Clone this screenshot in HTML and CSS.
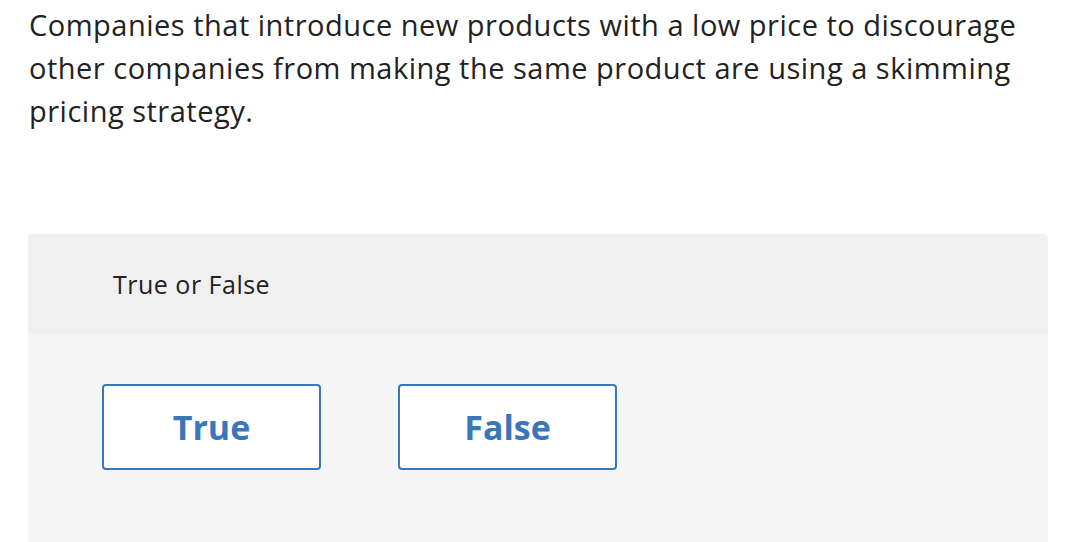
FILE: index.html
```html
<!DOCTYPE html>
<html lang="en">
<head>
<meta charset="utf-8">
<title>True or False</title>
<link rel="stylesheet" href="styles.css">
</head>
<body>
<main class="page">
  <p class="question">Companies that introduce new products with a low price to discourage other companies from making the same product are using a skimming pricing strategy.</p>
  <section class="panel">
    <header class="panel-head">True or False</header>
    <div class="panel-body">
      <button class="choice" type="button">True</button>
      <button class="choice" type="button">False</button>
    </div>
  </section>
</main>
</body>
</html>
```
FILE: styles.css
```css
html, body {
  margin: 0;
  padding: 0;
  background: #ffffff;
}
body {
  font-family: "Open Sans", "Liberation Sans", sans-serif;
  color: #222222;
}
.page {
  padding: 3px 34px 0 28px;
}
.question {
  margin: 0 0 0 1px;
  max-width: 1020px;
  font-size: 29px;
  line-height: 43px;
  letter-spacing: 0.5px;
  color: #222222;
}
.panel {
  margin-top: 102px;
  border-radius: 4px 4px 0 0;
  overflow: hidden;
}
.panel-head {
  background: #f0f0f0;
  height: 100px;
  display: flex;
  align-items: center;
  padding-left: 85px;
  font-size: 25px;
  letter-spacing: 0.5px;
  color: #222222;
}
.panel-body {
  background: #f5f5f5;
  display: flex;
  gap: 77px;
  padding: 50px 0 80px 74px;
}
.choice {
  width: 219px;
  height: 86px;
  background: #ffffff;
  border: 2px solid #3a77b9;
  border-radius: 4px;
  font-family: inherit;
  font-size: 34px;
  font-weight: 700;
  color: #3a77b9;
  cursor: pointer;
}
```
